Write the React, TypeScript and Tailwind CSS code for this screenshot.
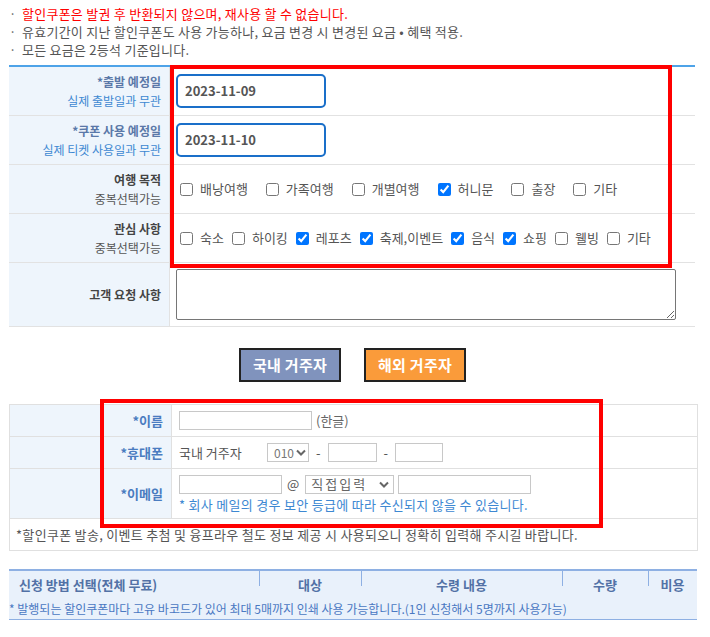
import React from 'react';

const font = "font-['Malgun_Gothic','Noto_Sans_CJK_KR',sans-serif]";

// Checkbox item
const Check: React.FC<{ label: string; checked?: boolean; gap?: string }> = ({ label, checked, gap = 'mr-[8px]' }) => (
  <label className={`flex items-center ${gap}`}>
    <input type="checkbox" defaultChecked={checked} className="w-[13px] h-[13px] m-0 mr-[7px] accent-[#0075ff]" />
    <span className="text-[#555]">{label}</span>
  </label>
);

const Label: React.FC<{ title: string; sub?: string; blue?: boolean }> = ({ title, sub, blue }) => (
  <div className="bg-[#eef5fc] border-r border-[#e2e2e2] flex flex-col items-end justify-center pr-[8px] leading-[19px]">
    <span className={`font-bold ${blue ? 'text-[#5a78a8]' : 'text-[#444]'}`}>{title}</span>
    {sub && <span className={blue ? 'text-[#3d88d2]' : 'text-[#555]'}>{sub}</span>}
  </div>
);

const Chevron = () => (
  <svg width="10" height="7" viewBox="0 0 10 7" className="shrink-0">
    <path d="M1 1.5 5 5.5 9 1.5" fill="none" stroke="#666" strokeWidth="2" />
  </svg>
);

export default function App() {
  return (
    <div className={`w-[710px] min-h-[637px] bg-white text-[12px] ${font}`}>
      {/* notes */}
      <ul className="pt-[5px] pl-[9px] leading-[18px] text-[13px] tracking-[0.25px]">
        <li className="flex text-[#ff0000]">
          <span className="w-[13px] text-[#666]">·</span>할인쿠폰은 발권 후 반환되지 않으며, 재사용 할 수 없습니다.
        </li>
        <li className="flex text-[#555]">
          <span className="w-[13px] text-[#666]">·</span>유효기간이 지난 할인쿠폰도 사용 가능하나, 요금 변경 시 변경된 요금 • 혜택 적용.
        </li>
        <li className="flex text-[#555]">
          <span className="w-[13px] text-[#666]">·</span>모든 요금은 2등석 기준입니다.
        </li>
      </ul>

      <div className="pl-[9px] mt-[6px]">
        {/* travel info table */}
        <div className="relative w-[686px] border-t-2 border-[#4ea3e8]">
          <div className="grid grid-cols-[161px_1fr] h-[49px] border-b border-[#e2e2e2]">
            <Label title="*출발 예정일" sub="실제 출발일과 무관" blue />
            <div className="flex items-center pl-[6px]">
              <div className="w-[150px] h-[34px] border-2 border-[#1a6fc9] rounded-[5px] flex items-center pl-[7px] font-bold text-[#555] text-[13px]">2023-11-09</div>
            </div>
          </div>
          <div className="grid grid-cols-[161px_1fr] h-[49px] border-b border-[#e2e2e2]">
            <Label title="*쿠폰 사용 예정일" sub="실제 티켓 사용일과 무관" blue />
            <div className="flex items-center pl-[6px]">
              <div className="w-[150px] h-[34px] border-2 border-[#1a6fc9] rounded-[5px] flex items-center pl-[7px] font-bold text-[#555] text-[13px]">2023-11-10</div>
            </div>
          </div>
          <div className="grid grid-cols-[161px_1fr] h-[49px] border-b border-[#e2e2e2]">
            <Label title="여행 목적" sub="중복선택가능" />
            <div className="flex items-center pl-[10px] text-[13px]">
              <Check label="배낭여행" gap="mr-[18px]" />
              <Check label="가족여행" gap="mr-[18px]" />
              <Check label="개별여행" gap="mr-[18px]" />
              <Check label="허니문" checked gap="mr-[18px]" />
              <Check label="출장" gap="mr-[18px]" />
              <Check label="기타" gap="mr-[18px]" />
            </div>
          </div>
          <div className="grid grid-cols-[161px_1fr] h-[49px] border-b border-[#e2e2e2]">
            <Label title="관심 사항" sub="중복선택가능" />
            <div className="flex items-center pl-[10px] text-[13px]">
              <Check label="숙소" />
              <Check label="하이킹" />
              <Check label="레포츠" checked />
              <Check label="축제,이벤트" checked />
              <Check label="음식" checked />
              <Check label="쇼핑" checked />
              <Check label="웰빙" />
              <Check label="기타" />
            </div>
          </div>
          <div className="grid grid-cols-[161px_1fr] h-[64px] border-b border-[#e2e2e2]">
            <Label title="고객 요청 사항" />
            <div className="pl-[6px] pt-[6px]">
              <textarea className="w-[500px] h-[51px] border border-[#767676] rounded-[2px] block" />
            </div>
          </div>
          <div className="absolute left-[161px] top-[-2px] w-[502px] h-[203px] border-4 border-[#ff0000] pointer-events-none" />
        </div>

        {/* residence buttons */}
        <div className="w-[687px] flex justify-center gap-[23px] mt-[21px]">
          <button className="w-[102px] h-[34px] bg-[#8093bd] border-2 border-[#222] text-white font-bold text-[15px] tracking-[0.3px]">국내 거주자</button>
          <button className="w-[102px] h-[34px] bg-[#fa9b3a] border-2 border-[#222] text-white font-bold text-[15px] tracking-[0.3px]">해외 거주자</button>
        </div>

        {/* personal info table */}
        <div className="relative w-[689px] border border-[#e0e0e0] mt-[22px] text-[13px]">
          <div className="grid grid-cols-[162px_1fr] h-[32px] border-b border-[#e0e0e0]">
            <div className="bg-[#eef5fc] border-r border-[#e0e0e0] flex items-center justify-end pr-[8px] font-bold text-[#4a7cc0]">*이름</div>
            <div className="flex items-center pl-[7px] text-[#666]">
              <div className="w-[133px] h-[19px] border border-[#c8c8c8]" />
              <span className="ml-[4px]">(한글)</span>
            </div>
          </div>
          <div className="grid grid-cols-[162px_1fr] h-[32px] border-b border-[#e0e0e0]">
            <div className="bg-[#eef5fc] border-r border-[#e0e0e0] flex items-center justify-end pr-[8px] font-bold text-[#4a7cc0]">*휴대폰</div>
            <div className="flex items-center pl-[7px] text-[#555]">
              <span className="w-[88px]">국내 거주자</span>
              <div className="w-[42px] h-[19px] border border-[#c8c8c8] flex items-center justify-between pl-[6px] pr-[2px] text-[12px] text-[#777]">
                <span>010</span>
                <Chevron />
              </div>
              <span className="mx-[7px]">-</span>
              <div className="w-[49px] h-[19px] border border-[#c8c8c8]" />
              <span className="mx-[7px]">-</span>
              <div className="w-[48px] h-[19px] border border-[#c8c8c8]" />
            </div>
          </div>
          <div className="grid grid-cols-[162px_1fr] h-[50px] border-b border-[#e0e0e0]">
            <div className="bg-[#eef5fc] border-r border-[#e0e0e0] flex items-center justify-end pr-[8px] font-bold text-[#4a7cc0]">*이메일</div>
            <div className="flex flex-col justify-center pl-[7px] gap-[3px]">
              <div className="flex items-center text-[#555]">
                <div className="w-[103px] h-[19px] border border-[#c8c8c8]" />
                <span className="ml-[5px] mr-[6px]">@</span>
                <div className="w-[89px] h-[19px] border border-[#c8c8c8] flex items-center justify-between pl-[5px] pr-[4px] text-[#666]">
                  <span className="tracking-[2px]">직접입력</span>
                  <Chevron />
                </div>
                <div className="w-[133px] h-[19px] border border-[#c8c8c8] ml-[4px]" />
              </div>
              <span className="text-[#3d88d2] leading-[16px] tracking-[0.3px]">* 회사 메일의 경우 보안 등급에 따라 수신되지 않을 수 있습니다.</span>
            </div>
          </div>
          <div className="h-[31px] flex items-center pl-[6px] text-[#555] tracking-[0.3px]">
            *할인쿠폰 발송, 이벤트 추첨 및 융프라우 철도 정보 제공 시 사용되오니 정확히 입력해 주시길 바랍니다.
          </div>
          <div className="absolute left-[90px] top-[-6px] w-[503px] h-[129px] border-4 border-[#ff0000] pointer-events-none" />
        </div>

        {/* application method table */}
        <div className="w-[688px] mt-[18px] border-t-2 border-b border-[#8eb0e3] bg-[#e9f1fb]">
          <div className="grid grid-cols-[250px_102px_201px_86px_49px] h-[27px] font-bold text-[#5271a6] text-[13px]">
            <div className="flex items-center pl-[10px]">신청 방법 선택(전체 무료)</div>
            <div className="relative flex items-center justify-center">
              <div className="absolute left-0 top-0 w-px h-[15px] bg-[#8eb0e3]" />대상
            </div>
            <div className="relative flex items-center justify-center">
              <div className="absolute left-0 top-0 w-px h-[15px] bg-[#8eb0e3]" />수령 내용
            </div>
            <div className="relative flex items-center justify-center">
              <div className="absolute left-0 top-0 w-px h-[15px] bg-[#8eb0e3]" />수량
            </div>
            <div className="relative flex items-center justify-center">
              <div className="absolute left-0 top-0 w-px h-[15px] bg-[#8eb0e3]" />비용
            </div>
          </div>
          <div className="h-[21px] flex items-center text-[#4a78c2] whitespace-nowrap">
            * 발행되는 할인쿠폰마다 고유 바코드가 있어 최대 5매까지 인쇄 사용 가능합니다.(1인 신청해서 5명까지 사용가능)
          </div>
        </div>
      </div>
    </div>
  );
}
